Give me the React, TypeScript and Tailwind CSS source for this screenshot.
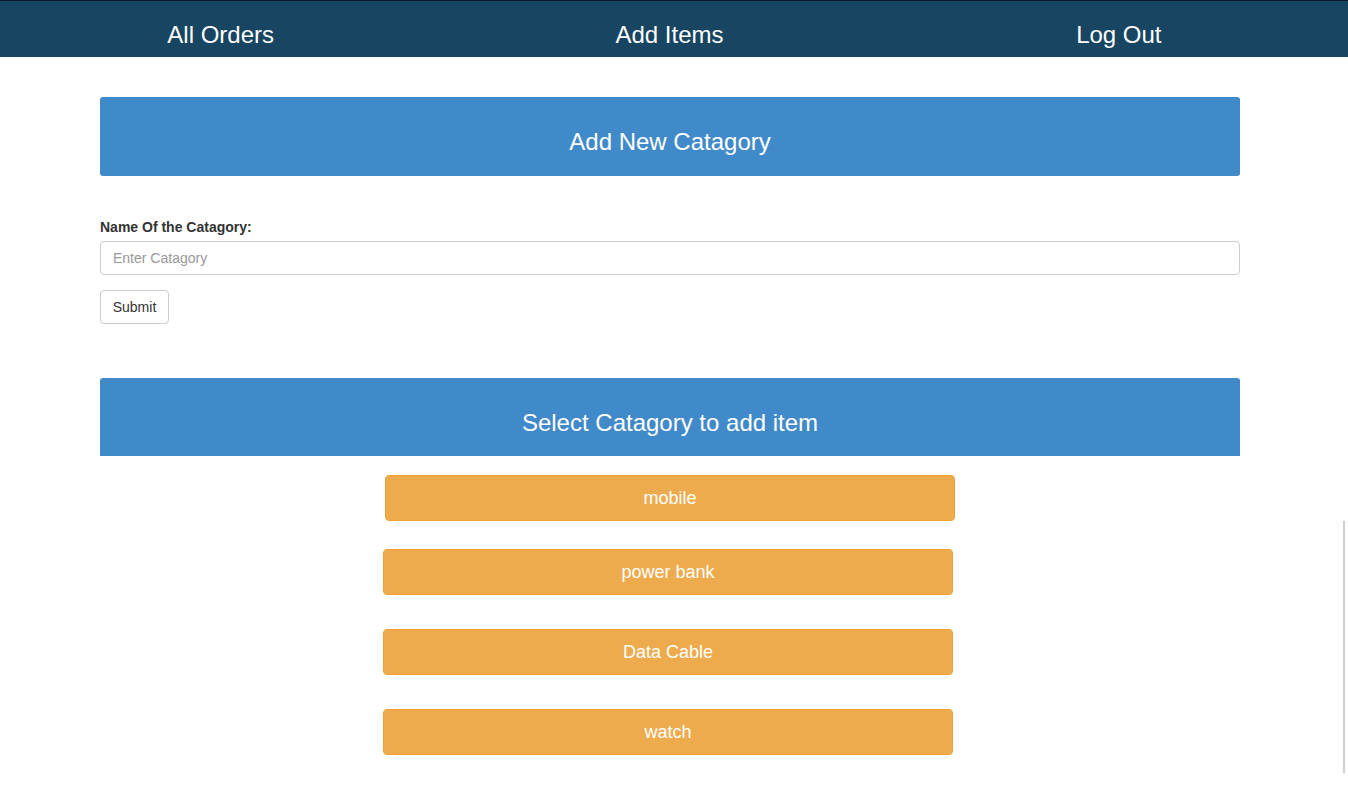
const categories = [
  { name: "mobile", shift: "ml-[2px]", gap: "mt-[19px]" },
  { name: "power bank", shift: "", gap: "mt-[28px]" },
  { name: "Data Cable", shift: "", gap: "mt-[34px]" },
  { name: "watch", shift: "", gap: "mt-[34px]" },
];

export default function App() {
  return (
    <div className="relative min-h-[812px] bg-white font-['Liberation_Sans',Arial,sans-serif] text-[#333]">
      <nav className="bg-[#174562]">
        <div className="h-px bg-[#0e1a2c]" />
        <ul className="grid h-[56px] grid-cols-3 pr-[9px] text-[24px] text-white">
          <li className="flex items-center justify-center pt-[12px] pr-[5px]">All Orders</li>
          <li className="flex items-center justify-center pt-[12px]">Add Items</li>
          <li className="flex items-center justify-center pt-[12px] pl-[6px]">Log Out</li>
        </ul>
      </nav>

      <main className="mx-[100px] w-[1140px] pt-[40px]">
        <div className="flex h-[79px] items-center justify-center rounded-[3px] bg-[#418ac9] pt-[10px] text-[24px] text-white">
          Add New Catagory
        </div>

        <form className="mt-[41px]">
          <label className="block text-[14px] leading-[20px] font-bold text-[#333]" htmlFor="catagory">
            Name Of the Catagory:
          </label>
          <input
            className="mt-[4px] block h-[34px] w-full rounded-[4px] border border-[#ccc] px-[12px] text-[14px] placeholder:text-[#999] focus:outline-none"
            id="catagory"
            placeholder="Enter Catagory"
            type="text"
          />
          <button className="mt-[15px] h-[34px] w-[69px] rounded-[4px] border border-[#ccc] bg-white text-[14px] text-[#333]" type="button">
            Submit
          </button>
        </form>

        <div className="mt-[54px] flex h-[78px] items-center justify-center rounded-t-[3px] bg-[#418ac9] pt-[12px] text-[24px] text-white">
          Select Catagory to add item
        </div>

        <div className="flex flex-col items-start pl-[283px]">
          {categories.map((c) => (
            <button
              className={`${c.gap} ${c.shift} flex h-[46px] w-[570px] items-center justify-center rounded-[4px] border border-[#eea236] bg-[#eeab4d] text-[18px] text-white`}
              key={c.name}
              type="button"
            >
              {c.name}
            </button>
          ))}
        </div>
      </main>

      <div className="absolute left-[1343px] top-[521px] h-[252px] w-[2px] bg-[#cfcfcf]" />
    </div>
  );
}
